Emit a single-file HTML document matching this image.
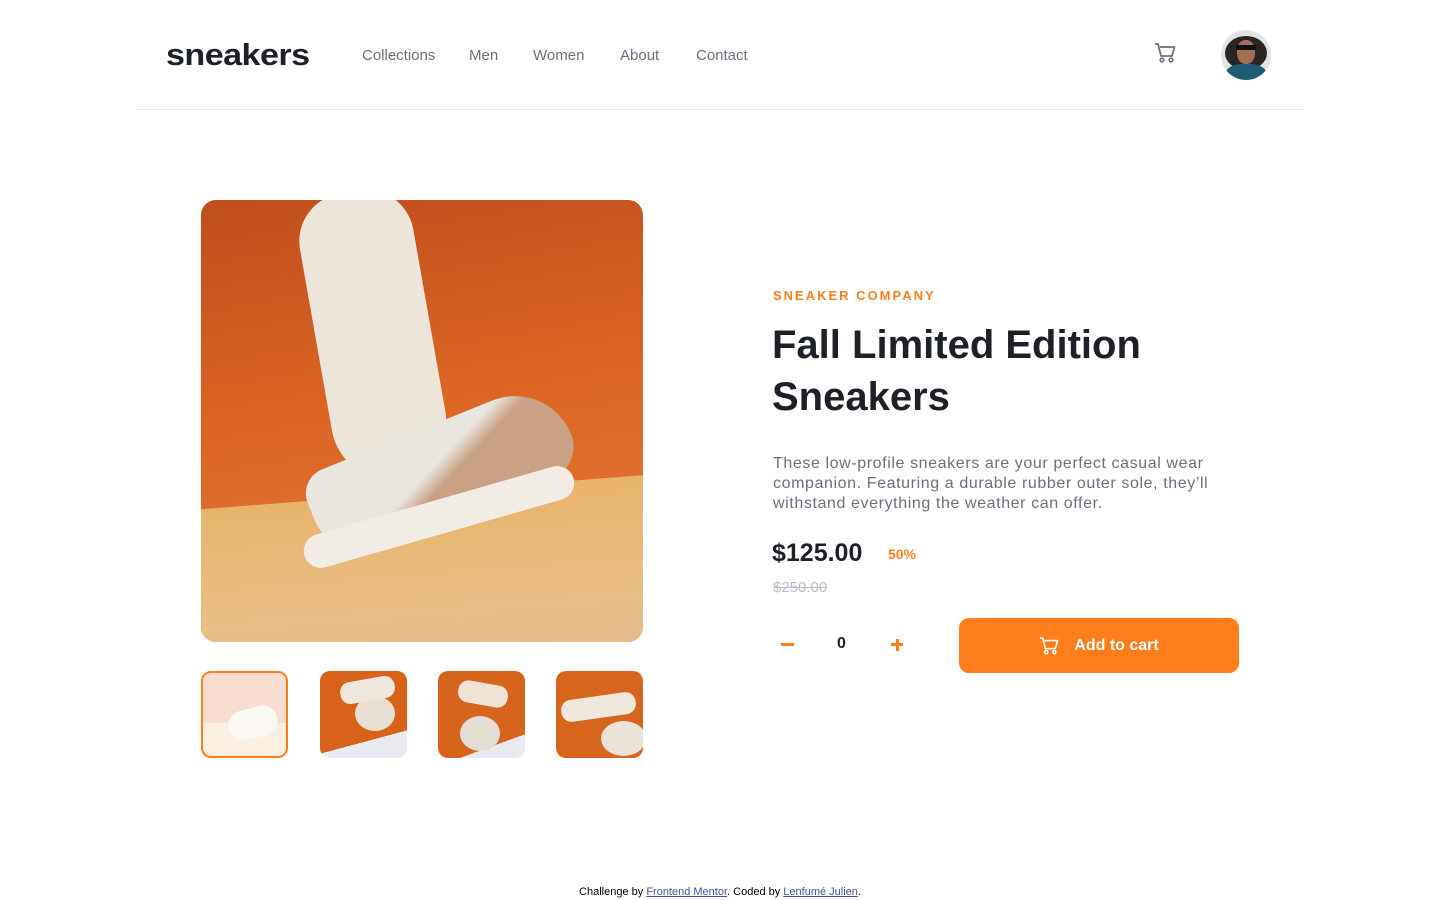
<!DOCTYPE html>
<html><head><meta charset="utf-8"><style>
*{margin:0;padding:0;box-sizing:border-box}
body{width:1440px;height:900px;background:#fff;font-family:"Liberation Sans",sans-serif;position:relative;overflow:hidden;color:#1d2026}
.logo{position:absolute;left:166px;top:37px;font-size:31px;font-weight:bold;letter-spacing:-0.5px;color:#1d2026;transform:scaleX(1.1);transform-origin:left}
nav{position:absolute;top:47px;left:362px;font-size:15px;color:#69707d}
nav span{position:absolute;white-space:nowrap}
.line{position:absolute;left:137px;top:109px;width:1166px;height:1px;background:#e4e9f2}
.avatar{position:absolute;left:1221px;top:30px;width:50px;height:50px;border-radius:50%;overflow:hidden;background:#dfe3e6}
.main{position:absolute;left:201px;top:200px;width:442px;height:442px;border-radius:15px;overflow:hidden;background:linear-gradient(170deg,#c04e1c 0%,#db6523 45%,#e67c3e 100%)}
.floor{position:absolute;left:-10px;top:310px;width:470px;height:200px;background:linear-gradient(180deg,#e8b46c,#e8be85 60%,#e0b88e);transform:skewY(-4.4deg);transform-origin:left top}
.th{position:absolute;top:671px;width:87px;height:87px;border-radius:10px;overflow:hidden}
.brand{position:absolute;left:773px;top:288px;font-size:13px;font-weight:bold;letter-spacing:2px;color:#ff7e1b}
h1{position:absolute;left:772px;top:319px;font-size:40px;line-height:52px;font-weight:bold;color:#1d2026}
.desc{position:absolute;left:773px;top:454px;font-size:16px;line-height:20px;color:#69707d;white-space:nowrap;letter-spacing:0.6px}
.price{position:absolute;left:772px;top:539px;font-size:25px;font-weight:bold}
.pct{position:absolute;left:888px;top:546px;font-size:14px;font-weight:bold;color:#ff7e1b}
.old{position:absolute;left:773px;top:579px;font-size:15px;color:#b6bcc8;text-decoration:line-through}
.qty{position:absolute;top:635px;font-size:16px;font-weight:bold}
.btn{position:absolute;left:959px;top:618px;width:280px;height:55px;border-radius:10px;background:#ff7e1b;color:#fff;font-weight:bold;font-size:16px;display:flex;align-items:center;justify-content:center;gap:15px}
footer{position:absolute;top:886px;left:0;width:1440px;text-align:center;font-size:11px;color:#000}
footer a{color:#3e52a3;text-decoration:underline}
</style></head><body>
<div class="logo">sneakers</div>
<nav><span style="left:0">Collections</span><span style="left:107px">Men</span><span style="left:171px">Women</span><span style="left:258px">About</span><span style="left:334px">Contact</span></nav>
<svg style="position:absolute;left:1154px;top:43px" width="22" height="20" viewBox="0 0 22 20"><path d="M1 1h3l3 12h11l2.5-9H6" fill="none" stroke="#69707d" stroke-width="1.8" stroke-linejoin="round"/><circle cx="8" cy="17" r="1.8" fill="none" stroke="#69707d" stroke-width="1.6"/><circle cx="17" cy="17" r="1.8" fill="none" stroke="#69707d" stroke-width="1.6"/></svg>
<div class="avatar">
<div style="position:absolute;left:4px;top:6px;width:42px;height:34px;border-radius:50%;background:#2a2422"></div>
<div style="position:absolute;left:16px;top:10px;width:18px;height:24px;border-radius:45%;background:#a06f55"></div>
<div style="position:absolute;left:15px;top:15px;width:20px;height:5px;background:#111"></div>
<div style="position:absolute;left:5px;top:34px;width:40px;height:22px;border-radius:40% 40% 0 0;background:#1f5c73"></div>
</div>
<div class="line"></div>

<div class="main"><div class="floor"></div>
<div style="position:absolute;left:115px;top:-10px;width:115px;height:290px;border-radius:50px 50px 60px 60px;background:#ece6da;transform:rotate(-10deg)"></div>
<div style="position:absolute;left:105px;top:225px;width:270px;height:95px;border-radius:30px 70px 40px 60px;background:linear-gradient(155deg,#e9e6e0 45%,#c9a285 55%);transform:rotate(-22deg)"></div>
<div style="position:absolute;left:98px;top:300px;width:280px;height:34px;border-radius:20px;background:#f1ede4;transform:rotate(-16deg)"></div>
</div>

<div class="th" style="left:201px;border:2px solid #ff7e1b;background:linear-gradient(180deg,#f3cdb8 60%,#f7e6d2 60%)"><div style="position:absolute;inset:0;background:rgba(255,255,255,.35)"></div><div style="position:absolute;left:25px;top:35px;width:50px;height:30px;border-radius:15px;background:#fbf8f4;transform:rotate(-15deg)"></div></div>
<div class="th" style="left:320px;background:linear-gradient(165deg,#d9621a 75%,#e9eaf0 75%)"><div style="position:absolute;left:35px;top:25px;width:40px;height:35px;border-radius:50%;background:#e8dfd3"></div><div style="position:absolute;left:20px;top:8px;width:55px;height:22px;border-radius:10px;background:#efe7de;transform:rotate(-10deg)"></div></div>
<div class="th" style="left:438px;background:linear-gradient(160deg,#d6641c 80%,#e9eaf0 80%)"><div style="position:absolute;left:22px;top:45px;width:40px;height:35px;border-radius:50%;background:#e4ddd3"></div><div style="position:absolute;left:20px;top:12px;width:50px;height:22px;border-radius:10px;background:#efe3d6;transform:rotate(10deg)"></div></div>
<div class="th" style="left:556px;background:#d8651e"><div style="position:absolute;left:45px;top:50px;width:45px;height:35px;border-radius:50%;background:#ebe3d8"></div><div style="position:absolute;left:5px;top:25px;width:75px;height:22px;border-radius:10px;background:#efe6dc;transform:rotate(-8deg)"></div></div>

<div class="brand">SNEAKER COMPANY</div>
<h1>Fall Limited Edition<br>Sneakers</h1>
<div class="desc">These low-profile sneakers are your perfect casual wear<br>companion. Featuring a durable rubber outer sole, they’ll<br>withstand everything the weather can offer.</div>
<div class="price">$125.00</div>
<div class="pct">50%</div>
<div class="old">$250.00</div>
<div style="position:absolute;left:781px;top:643px;width:13px;height:3px;background:#ff7e1b"></div>
<div class="qty" style="left:837px">0</div>
<div style="position:absolute;left:891px;top:643px;width:12px;height:3px;background:#ff7e1b"></div>
<div style="position:absolute;left:895.5px;top:638.5px;width:3px;height:12px;background:#ff7e1b"></div>
<div class="btn"><svg width="20" height="18" viewBox="0 0 22 20"><path d="M1 1h3l3 12h11l2.5-9H6" fill="none" stroke="#fff" stroke-width="1.8" stroke-linejoin="round"/><circle cx="8" cy="17" r="1.8" fill="none" stroke="#fff" stroke-width="1.6"/><circle cx="17" cy="17" r="1.8" fill="none" stroke="#fff" stroke-width="1.6"/></svg>Add to cart</div>

<footer>Challenge by <a>Frontend Mentor</a>. Coded by <a>Lenfumé Julien</a>.</footer>
</body></html>
